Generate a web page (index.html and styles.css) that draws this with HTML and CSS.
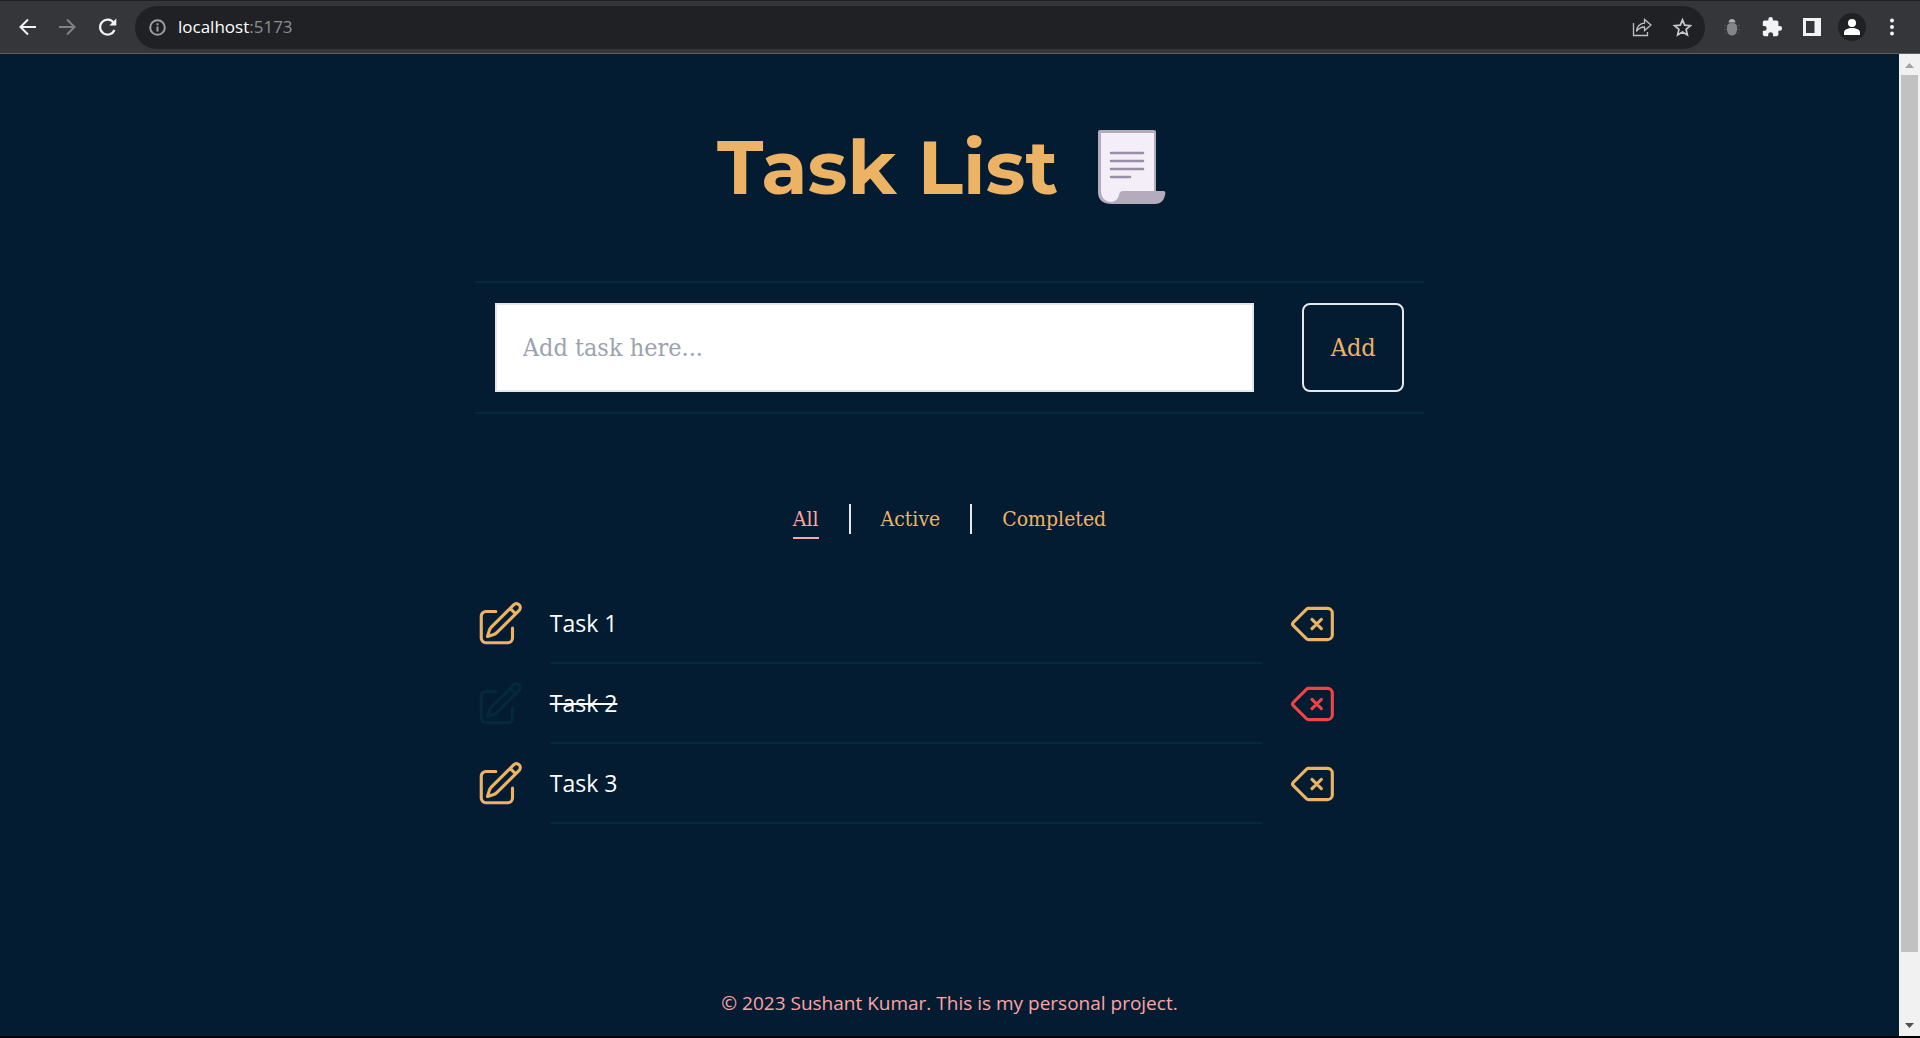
FILE: index.html
```html
<!DOCTYPE html>
<html lang="en">
<head>
<meta charset="utf-8">
<title>Task List</title>
<link rel="stylesheet" href="styles.css">
</head>
<body>
<div class="toolbar">
  <button class="tool" type="button" aria-label="Back"><svg viewBox="0 0 20 20" width="20" height="20" fill="none" stroke="#f1f3f4" stroke-width="2"><path d="M18 10H3M10 2.500 2.500 10 10 17.500"/></svg></button>
  <button class="tool" type="button" aria-label="Forward"><svg viewBox="0 0 20 20" width="20" height="20" fill="none" stroke="#808286" stroke-width="2"><path d="M1 10h15M9 2.500 16.500 10 9 17.500"/></svg></button>
  <button class="tool" type="button" aria-label="Reload"><svg viewBox="0 0 20 20" width="20" height="20"><path d="M16.500 13a7.500 7.500 0 1 1-.8-7.200" fill="none" stroke="#f1f3f4" stroke-width="2.200"/><path d="M18.300 1.500v7H11.300z" fill="#f1f3f4"/></svg></button>
  <div class="address">
    <svg viewBox="0 0 18 18" width="18" height="18" fill="none" stroke="#9aa0a6" stroke-width="2"><circle cx="8.500" cy="9.500" r="7.300"/><path d="M8.500 8.500v5M8.500 5.300v2"/></svg>
    <p class="url">localhost<span class="port">:5173</span></p>
    <button class="tool" type="button" aria-label="Share"><svg viewBox="0 0 20 20" width="20" height="20" fill="none" stroke="#bdc1c6" stroke-width="1.300"><path d="M1.500 6v12.500h14V15"/><path d="M4.500 14.500C5 9 8 6.500 12.500 6.200V2.500L19 8l-6.500 5.500V10C9 10 6.500 11.500 4.500 14.500z"/></svg></button>
    <button class="tool" type="button" aria-label="Bookmark"><svg viewBox="0 0 20 20" width="20" height="20" fill="none" stroke="#c6c8cb" stroke-width="1.700"><path d="m10.500 2.800 2.200 5.300 5.800.5-4.400 3.800 1.300 5.600-4.900-3-4.900 3 1.300-5.600-4.400-3.800 5.800-.5z"/></svg></button>
  </div>
  <div class="extensions">
    <button class="tool" type="button" aria-label="Debugger"><svg viewBox="0 0 18 18" width="18" height="18"><path d="M5.500 4.500Q6 1 9 1t3.500 3.500z" fill="#b0b0b0"/><path d="M4 9q0-4 5-4t5 4v3a5 5.500 0 0 1-10 0z" fill="#858585"/><path d="M1 7l3 1M17 7l-3 1M1 11.500h3M17 11.500h-3M2 16l2.500-2M16 16l-2.500-2" stroke="#505154"/></svg></button>
    <button class="tool" type="button" aria-label="Extensions"><svg viewBox="0 0 24 24" width="22" height="22" fill="#f1f3f4"><path d="M20.500 11H19V7c0-1.100-.9-2-2-2h-4V3.500a2.500 2.500 0 0 0-5 0V5H4c-1.100 0-2 .9-2 2v3.800h1.500a2.700 2.700 0 0 1 0 5.400H2V20c0 1.100.9 2 2 2h3.800v-1.500a2.700 2.700 0 0 1 5.400 0V22H17c1.100 0 2-.9 2-2v-4h1.500a2.500 2.500 0 0 0 0-5z"/></svg></button>
    <button class="tool" type="button" aria-label="Side panel"><svg viewBox="0 0 18 18" width="18" height="18"><path d="M0 0h18v18H0zM3 3v12h8.500V3z" fill="#f1f3f4" fill-rule="evenodd"/></svg></button>
    <button class="tool" type="button" aria-label="Profile"><svg viewBox="0 0 28 28" width="28" height="28"><circle cx="14" cy="14" r="14" fill="#202124"/><circle cx="14" cy="10" r="4" fill="#fff"/><path d="M6 22v-2.500c0-3 4-4.500 8-4.500s8 1.500 8 4.500V22z" fill="#fff"/></svg></button>
    <button class="tool" type="button" aria-label="Menu"><svg viewBox="0 0 18 18" width="18" height="18" fill="#f1f3f4"><circle cx="9" cy="2.500" r="2"/><circle cx="9" cy="9" r="2"/><circle cx="9" cy="15.500" r="2"/></svg></button>
  </div>
</div>

<div class="viewport">
  <div class="page">
    <header class="title">
      <h1>Task List</h1>
      <svg viewBox="0 0 68 75" width="68" height="75" aria-hidden="true">
        <path d="M2 0h54q2 0 2 2v60h-8L14 74Q0 74 0 62V2Q0 0 2 0z" fill="#b4acbc"/>
        <path d="M3 3h53v58H26c-4 0-4 1-5 4-1 4-4 7-7 7C6 72 3 66 3 61z" fill="#f3eef8"/>
        <path d="M13 72c6 0 8-4 9-8 1-2 2-3 4-3h39c2 0 3 1 2 4-1 6-5 9-10 9H13z" fill="#b4acbc"/>
        <path d="M13 23h32M13 31h32M13 39h32M13 47h19" stroke="#998ea4" stroke-width="2.500" stroke-linecap="round"/>
      </svg>
    </header>

    <form class="new-task">
      <input class="task-input" type="text" placeholder="Add task here..." aria-label="New task">
      <button class="add" type="button">Add</button>
    </form>

    <nav class="filters" aria-label="Filter tasks">
      <button class="filter selected" type="button">All</button>
      <span class="divider"></span>
      <button class="filter" type="button">Active</button>
      <span class="divider"></span>
      <button class="filter" type="button">Completed</button>
    </nav>

    <ul class="tasks">
      <li class="task">
        <button class="icon" type="button" aria-label="Edit Task 1"><svg viewBox="0 0 24 24"><use href="#edit"/></svg></button>
        <span class="name">Task 1</span>
        <button class="icon" type="button" aria-label="Delete Task 1"><svg viewBox="0 0 24 24"><use href="#delete"/></svg></button>
      </li>
      <li class="task done">
        <button class="icon edit" type="button" aria-label="Edit Task 2"><svg viewBox="0 0 24 24"><use href="#edit"/></svg></button>
        <span class="name"><s>Task 2</s></span>
        <button class="icon delete" type="button" aria-label="Delete Task 2"><svg viewBox="0 0 24 24"><use href="#delete"/></svg></button>
      </li>
      <li class="task">
        <button class="icon" type="button" aria-label="Edit Task 3"><svg viewBox="0 0 24 24"><use href="#edit"/></svg></button>
        <span class="name">Task 3</span>
        <button class="icon" type="button" aria-label="Delete Task 3"><svg viewBox="0 0 24 24"><use href="#delete"/></svg></button>
      </li>
    </ul>

    <footer class="footer">© 2023 Sushant Kumar. This is my personal project.</footer>
  </div>

  <div class="scrollbar" aria-hidden="true">
    <svg viewBox="0 0 21 21" width="21" height="21"><path d="M6 14l4.500-5 4.500 5z" fill="#a3a3a3"/></svg>
    <div class="track"><div class="thumb"></div><div class="rest"></div></div>
    <svg viewBox="0 0 21 21" width="21" height="21"><path d="M6 8l4.500 5L15 8z" fill="#505050"/></svg>
  </div>
</div>

<svg class="sprite" aria-hidden="true">
  <symbol id="edit" viewBox="0 0 24 24"><path d="m16.862 4.487 1.687-1.688a1.875 1.875 0 1 1 2.652 2.652L10.582 16.070a4.500 4.500 0 0 1-1.897 1.130L6 18l.8-2.685a4.500 4.500 0 0 1 1.130-1.897l8.932-8.931Zm0 0L19.500 7.125M18 14v4.750A2.250 2.250 0 0 1 15.750 21H5.250A2.250 2.250 0 0 1 3 18.750V8.250A2.250 2.250 0 0 1 5.250 6H10"/></symbol>
  <symbol id="delete" viewBox="0 0 24 24"><path d="M12 9.750 14.250 12m0 0 2.250 2.250M14.250 12l2.250-2.250M14.250 12 12 14.250m-2.580 4.920-6.374-6.375a1.125 1.125 0 0 1 0-1.590L9.420 4.830c.21-.211.497-.33.795-.33H19.500a2.250 2.250 0 0 1 2.250 2.250v10.500a2.250 2.250 0 0 1-2.250 2.250h-9.284c-.298 0-.585-.119-.795-.33Z"/></symbol>
</svg>
</body>
</html>
```
FILE: styles.css
```css
:root {
  --bg: #041c32;
  --line: #04293a;
  --accent: #ecb365;
  --pink: #fca5a5;
  --slab: "Roboto Slab", "DejaVu Serif Condensed", "DejaVu Serif", serif;
  --sans: "Segoe UI", "Open Sans", "Noto Sans", sans-serif;
}

* { box-sizing: border-box; }

body {
  margin: 0;
  padding-bottom: 2px;
  min-height: 100vh;
  display: flex;
  flex-direction: column;
  background: #000;
  font-family: var(--sans);
}

button {
  padding: 0;
  border: 0;
  background: none;
  cursor: pointer;
}

.sprite { position: absolute; width: 0; height: 0; }

/* Browser toolbar */
.toolbar {
  display: flex;
  align-items: center;
  height: 54px;
  padding: 0 8px;
  border-top: 1px solid #202124;
  border-bottom: 1px solid #5f6064;
  background: #35363a;
}
.tool {
  display: flex;
  align-items: center;
  justify-content: center;
  width: 40px;
  height: 40px;
}
.address {
  flex: 1;
  display: flex;
  align-items: center;
  height: 43px;
  margin: 0 7px;
  padding: 0 3px 0 14px;
  border-radius: 22px;
  background: #202124;
}
.url {
  flex: 1;
  margin: 0 0 0 11px;
  font-size: 17px;
  line-height: 24px;
  color: #fff;
}
.port { color: #8c9095; }
.extensions { display: flex; }

/* Page */
.viewport { flex: 1; display: flex; }
.page {
  flex: 1;
  display: flex;
  flex-direction: column;
  align-items: center;
  background: var(--bg);
}
.title {
  display: flex;
  justify-content: center;
  align-items: center;
  gap: 40px;
  padding: 63px 16px 64px 0;
}
.title h1 {
  margin: 0;
  font: 700 75px/100px Montserrat, Inter, sans-serif;
  color: var(--accent);
}

.new-task {
  display: flex;
  gap: 48px;
  width: 50%;
  padding: 20px;
  border-top: 2px solid var(--line);
  border-bottom: 2px solid var(--line);
}
.task-input, .add {
  height: 89px;
  border: 2px solid #e5e7eb;
  font-family: var(--slab);
  font-size: 25px;
}
.task-input {
  flex: 1;
  min-width: 0;
  padding: 0 26px;
  border-radius: 0;
  background: #fff;
  color: var(--bg);
}
.task-input::placeholder { color: #9ca3af; opacity: 1; }
.add {
  width: 102px;
  border-radius: 8px;
  color: var(--accent);
}

.filters {
  display: flex;
  align-items: flex-start;
  gap: 30px;
  margin-top: 90px;
}
.filter {
  height: 35px;
  padding-bottom: 3px;
  border-bottom: 2px solid transparent;
  font: 21px/30px var(--slab);
  color: var(--accent);
}
.selected { border-color: var(--pink); color: var(--pink); }
.divider { width: 2px; height: 30px; background: #e5e7eb; }

.tasks {
  width: 50%;
  margin: 45px 0 0;
  padding: 0;
  list-style: none;
}
.task {
  display: flex;
  align-items: center;
  gap: 25px;
  height: 80px;
}
.icon { width: 50px; height: 50px; color: var(--accent); }
.icon svg {
  display: block;
  width: 50px;
  height: 50px;
  fill: none;
  stroke: currentColor;
  stroke-width: 1.5;
  stroke-linecap: round;
  stroke-linejoin: round;
}
.name {
  width: 75%;
  height: 80px;
  border-bottom: 2px solid var(--line);
  font-size: 23px;
  line-height: 78px;
  color: #fff;
}
.done .edit { color: var(--line); }
.done .delete { color: #ef4444; }

.footer {
  margin-top: auto;
  padding: 64px 0 18px;
  font-size: 19px;
  line-height: 30px;
  color: var(--pink);
}

/* Scrollbar */
.scrollbar {
  display: flex;
  flex-direction: column;
  width: 21px;
  background: #f1f1f1;
}
.track {
  flex: 1;
  display: flex;
  flex-direction: column;
  padding: 0 2px;
}
.thumb { flex: 14; background: #c1c1c1; }
.rest { flex: 1; }
```
